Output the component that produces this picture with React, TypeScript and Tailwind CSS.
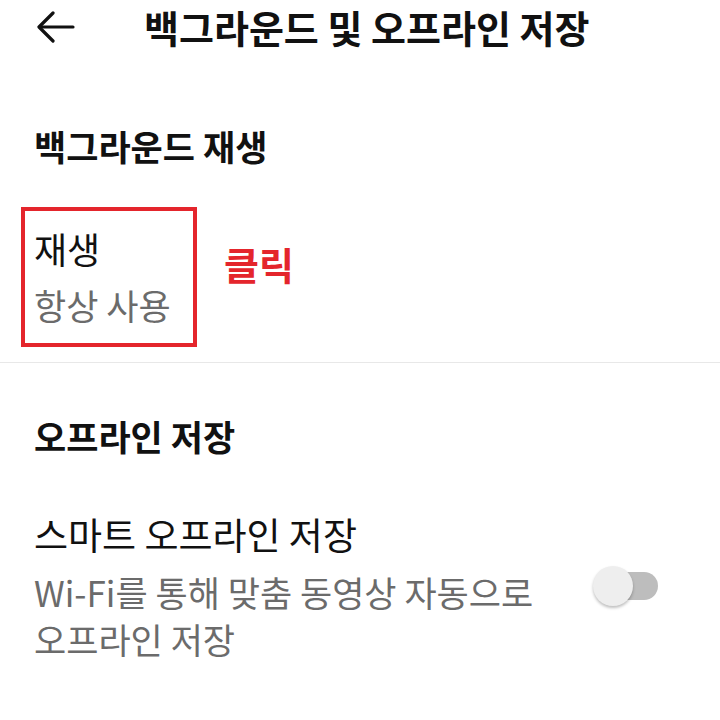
export default function App() {
  return (
    <div
      className="w-[720px] h-[720px] bg-white text-[#111111] overflow-hidden"
      style={{ fontFamily: '"Noto Sans CJK KR", "Noto Sans", sans-serif' }}
    >
      <header className="h-[56px] flex items-start">
        <button className="ml-[37px] mt-[11px] w-[38px] h-[32px] flex items-center justify-center text-[#111]">
          <svg width="38" height="32" viewBox="0 0 38 32" fill="none" stroke="currentColor" strokeWidth="3.2" strokeLinecap="round" strokeLinejoin="round">
            <path d="M36 16H3" />
            <path d="M16 2L2 16l14 14" />
          </svg>
        </button>
        <h1 className="ml-[69px] mt-[4px] text-[38px] leading-[46px] font-bold whitespace-nowrap">
          백그라운드 및 오프라인 저장
        </h1>
      </header>

      <h2 className="mt-[68px] pl-[34px] text-[35px] leading-[44px] font-bold">백그라운드 재생</h2>

      <div className="mt-[39px] flex items-start">
        <div className="ml-[21px] w-[176px] h-[140px] border-4 border-[#e4252c] pl-[9px] pt-[15px]">
          <div className="text-[36px] leading-[44px]">재생</div>
          <div className="mt-[13px] text-[35px] leading-[44px] text-[#6b6b6b]">항상 사용</div>
        </div>
        <div className="ml-[27px] mt-[35px] text-[38px] leading-[44px] font-bold text-[#e4252c]">클릭</div>
      </div>

      <div className="mt-[15px] h-px bg-[#e8e8e8]" />

      <h2 className="mt-[51px] pl-[34px] text-[35px] leading-[44px] font-bold">오프라인 저장</h2>

      <div className="mt-[56px] flex items-start pl-[34px] pr-[62px]">
        <div className="flex-1">
          <div className="-mt-[2px] text-[37px] leading-[44px]">스마트 오프라인 저장</div>
          <div className="mt-[12px] text-[35px] leading-[47px] text-[#6b6b6b] whitespace-nowrap">
            Wi-Fi를 통해 맞춤 동영상 자동으로
            <br />
            오프라인 저장
          </div>
        </div>
        <div className="relative mt-[52px] w-[65px] h-[40px] shrink-0">
          <div className="absolute left-[7px] right-0 top-[6px] h-[28px] rounded-full bg-[#bdbdbd]" />
          <div className="absolute left-0 top-0 w-[40px] h-[40px] rounded-full bg-[#eeeeee] shadow-[0_2px_3px_rgba(0,0,0,0.25)]" />
        </div>
      </div>
    </div>
  );
}
